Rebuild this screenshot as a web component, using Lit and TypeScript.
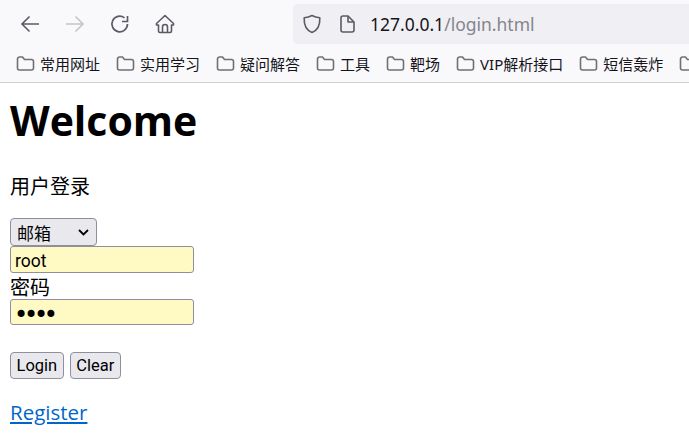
import { LitElement, html, css } from "lit";
import { customElement } from "lit/decorators.js";

const folder = html`<svg class="folder" viewBox="0 0 19 17" width="19" height="17" fill="none" stroke="#6f6f76" stroke-width="1.6"><path d="M1.500 4A2 2 0 0 1 3.500 2H6.500L8.500 4.500H15.500A2 2 0 0 1 17.500 6.500V13A2 2 0 0 1 15.500 15H3.500A2 2 0 0 1 1.500 13Z" stroke-linejoin="round"/></svg>`;
const bookmarks = ["常用网址", "实用学习", "疑问解答", "工具", "靶场", "VIP解析接口", "短信轰炸", ""];

@customElement("app-root")
export class AppRoot extends LitElement {
  static styles = css`
    :host { display: block; width: 689px; height: 440px; overflow: hidden; background: #fff; color: #000;
      font-family: "Open Sans", "Noto Sans CJK SC", sans-serif; }
    .chrome { height: 82px; background: #f9f9fb; border-bottom: 1px solid #cfcfd4; display: flex; flex-direction: column; }
    .nav { height: 44px; display: flex; align-items: center; }
    .navbtns { display: flex; align-items: center; gap: 25px; padding: 3px 0 0 20px; width: 293px; box-sizing: border-box; }
    .navbtns svg { display: block; flex: none; }
    .url { flex: 1; height: 40px; margin-top: 3px; background: #f0f0f4; border-radius: 4px 0 0 4px; display: flex; align-items: center; padding-left: 9px; }
    .url svg { display: block; flex: none; }
    .doc { margin-left: 17px; }
    .addr { font-size: 17.500px; color: #15141a; margin-left: 15px; font-family: "Noto Sans", sans-serif; }
    .addr span { color: #85858c; }
    .bm { display: flex; align-items: center; height: 38px; padding-left: 16px; gap: 16px; white-space: nowrap; }
    .bmi { display: flex; align-items: center; gap: 5px; font-size: 15px; color: #15141a; font-family: "Noto Sans", "Noto Sans CJK SC", sans-serif; }
    .page { padding: 0 10px; font-size: 20px; line-height: 26px; }
    h1 { font-size: 41px; line-height: 58px; margin: 8px 0 0; font-weight: 700; }
    p { margin: 0; }
    .title { margin: 24px 0 19px; font-family: "Noto Sans CJK SC", sans-serif; font-size: 20px; }
    .selwrap { position: relative; display: block; width: 87px; height: 28px; }
    .sel { appearance: none; display: block; box-sizing: border-box; width: 87px; height: 28px; font-size: 17px; background: #e9e9ed; border: 1px solid #8f8f9d; border-radius: 4px; padding: 0 6px; color: #000; font-family: "Noto Sans CJK SC", sans-serif; }
    .chev { position: absolute; right: 8px; top: 11px; pointer-events: none; }
    .inp { display: block; box-sizing: border-box; width: 184px; height: 27px; font-family: "Roboto", sans-serif; font-size: 17.500px; background: #fff9c4; border: 1px solid #8f8f9d; border-radius: 3px; padding: 2px 4px 0; color: #000; outline: none; }
    .pw { height: 26px; font-family: "DejaVu Sans", sans-serif; font-size: 24px; letter-spacing: -4.200px; padding: 5px 3px 0; }
    .lab { height: 26px; line-height: 27px; font-family: "Noto Sans CJK SC", sans-serif; font-size: 20px; }
    .btns { display: flex; gap: 6px; margin-top: 27px; }
    button { box-sizing: border-box; height: 27px; font-family: "Roboto", sans-serif; font-size: 16.500px; line-height: 1; background: #e9e9ed; border: 1px solid #8f8f9d; border-radius: 4px; padding: 2px 5.500px 0; color: #000; }
    .reg { display: block; margin-top: 19px; font-size: 20.500px; line-height: 28px; color: #0066cc; text-decoration: underline; }
  `;
  render() {
    return html`
      <div class="chrome">
        <div class="nav">
          <div class="navbtns">
            <svg width="20" height="20" viewBox="0 0 20 20" fill="none" stroke="#5b5b66" stroke-width="1.6"><path d="M19 10H2M9.500 2.500 2 10l7.500 7.500"/></svg>
            <svg width="20" height="20" viewBox="0 0 20 20" fill="none" stroke="#c4c4c8" stroke-width="1.6"><path d="M1 10H18M10.500 2.500 18 10l-7.500 7.500"/></svg>
            <svg width="20" height="20" viewBox="0 0 20 20" fill="none" stroke="#5b5b66" stroke-width="1.7"><path d="M17.500 10A7.800 7.800 0 1 1 14.500 3.800"/><path d="M17.500 2V7.500H12" /></svg>
            <svg width="20" height="20" viewBox="0 0 20 20" fill="none" stroke="#5b5b66" stroke-width="1.6" stroke-linejoin="round"><path d="M10 1.500 1.500 9.500V11H3.500V17A1.500 1.500 0 0 0 5 18.500H15A1.500 1.500 0 0 0 16.500 17V11H18.500V9.500Z"/><path d="M7.500 18.500V13A2.500 2.500 0 0 1 12.500 13V18.500"/></svg>
          </div>
          <div class="url">
            <svg width="20" height="20" viewBox="0 0 20 20" fill="none" stroke="#5b5b66" stroke-width="1.6" stroke-linejoin="round"><path d="M10 1.500C7.500 3 5 3.500 2.200 3.700 1.800 11 4 16 10 18.500 16 16 18.200 11 17.800 3.700 15 3.500 12.500 3 10 1.500Z"/></svg>
            <svg class="doc" width="16" height="18" viewBox="0 0 16 18" fill="none" stroke="#5b5b66" stroke-width="1.6" stroke-linejoin="round"><path d="M2 3A2 2 0 0 1 4 1H9L15 7V15A2 2 0 0 1 13 17H4A2 2 0 0 1 2 15Z"/><path d="M9 1V7H15"/></svg>
            <div class="addr">127.0.0.1<span>/login.html</span></div>
          </div>
        </div>
        <div class="bm">
          ${bookmarks.map((b) => html`<div class="bmi">${folder}${b}</div>`)}
        </div>
      </div>
      <div class="page">
        <h1>Welcome</h1>
        <p class="title">用户登录</p>
        <div class="selwrap">
          <select class="sel"><option>邮箱</option></select>
          <svg class="chev" width="11" height="7" viewBox="0 0 11 7" fill="none" stroke="#000" stroke-width="1.800"><path d="M1 1 5.500 5.500 10 1"/></svg>
        </div>
        <input class="inp" value="root" />
        <div class="lab">密码</div>
        <input class="inp pw" type="password" value="root" />
        <div class="btns"><button>Login</button><button>Clear</button></div>
        <a class="reg" href="#">Register</a>
      </div>
    `;
  }
}
